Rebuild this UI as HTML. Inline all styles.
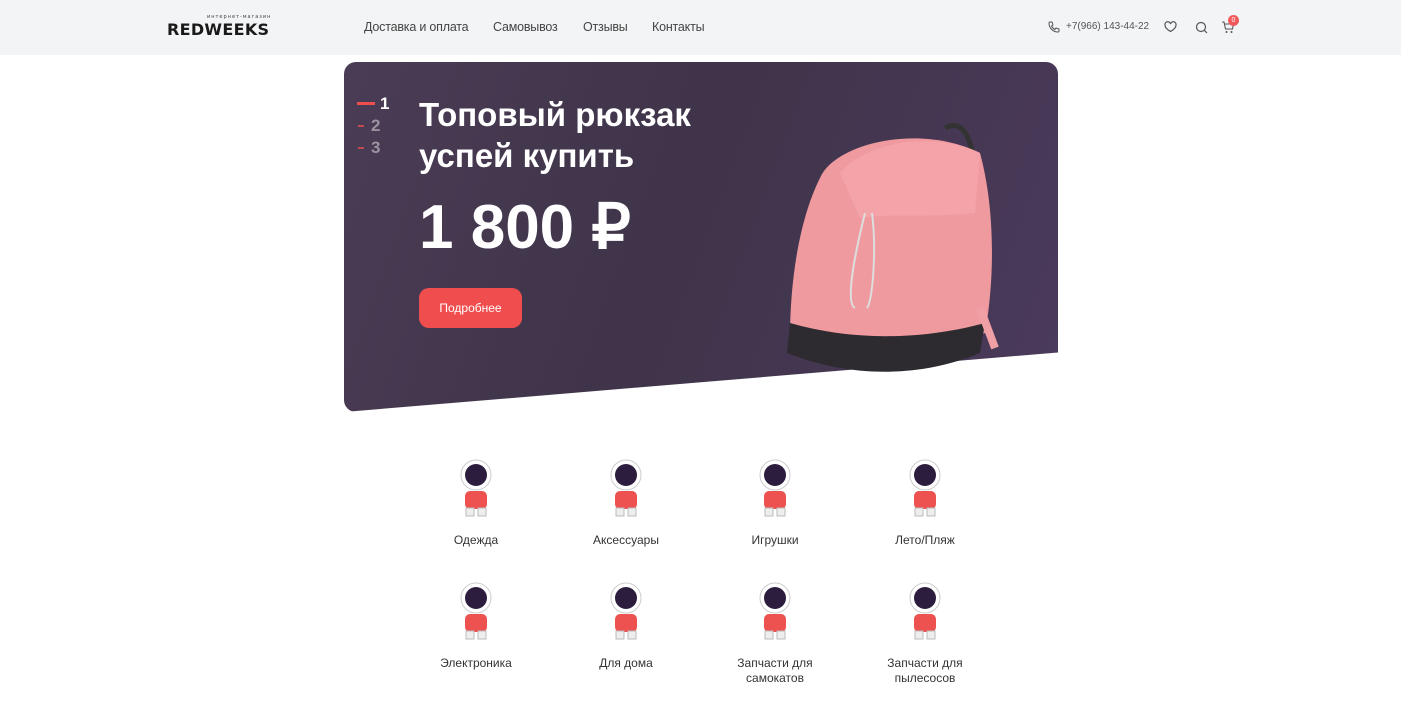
<!DOCTYPE html>
<html><head><meta charset="utf-8"><style>
*{margin:0;padding:0;box-sizing:border-box}
body{width:1401px;height:725px;background:#fff;font-family:"Liberation Sans",sans-serif;position:relative;overflow:hidden}
.hdr{position:absolute;left:0;top:0;width:1401px;height:55px;background:#f3f4f6}
.logo{position:absolute;left:167px;top:20px;font-weight:bold;font-size:16px;letter-spacing:0.3px;color:#1a1a1a;font-family:"DejaVu Sans",sans-serif;white-space:nowrap}
.logo small{position:absolute;left:40px;top:-6px;font-size:5px;letter-spacing:1px;color:#444;font-weight:normal;white-space:nowrap}
.nav{position:absolute;top:20px;font-size:12.5px;letter-spacing:-0.2px;color:#444;white-space:nowrap}
.ph{position:absolute;left:1066px;top:21px;font-size:10px;color:#555;white-space:nowrap}
.banner{position:absolute;left:344px;top:62px;width:714px;height:350px;border-radius:12px;background:linear-gradient(110deg,#4a3c55 0%,#3f3449 45%,#4b3a5c 100%);clip-path:polygon(0 0,100% 0,100% 83%,0 100%)}
.t{position:absolute;color:#fff;font-weight:bold;white-space:nowrap}
.btn{position:absolute;left:419px;top:288px;width:103px;height:40px;border-radius:10px;background:#f04e4e;color:#fff;font-size:12px;text-align:center;line-height:40px}
.cat{position:absolute;width:140px;text-align:center;font-size:12px;color:#333;line-height:15px}
.ic{position:absolute}
</style></head><body>
<div class="hdr"></div>
<div class="logo"><small>интернет-магазин</small>REDWEEKS</div>
<div class="nav" style="left:364px">Доставка и оплата</div>
<div class="nav" style="left:493px">Самовывоз</div>
<div class="nav" style="left:583px">Отзывы</div>
<div class="nav" style="left:652px">Контакты</div>
<svg class="ic" style="left:1048px;top:21px" width="12" height="12" viewBox="0 0 12 12"><path d="M2 1l2 0 1 3-1.5 1a7 7 0 003.5 3.5L8 7l3 1v2a1 1 0 01-1 1C5 11 1 7 1 2a1 1 0 011-1z" fill="none" stroke="#555" stroke-width="1"/></svg>
<div class="ph">+7(966) 143-44-22</div>
<svg class="ic" style="left:1164px;top:21px" width="13" height="12" viewBox="0 0 13 12"><path d="M6.5 10.5C2 8 1 6 1 4a2.6 2.6 0 015.5-1 2.6 2.6 0 015.5 1c0 2-1 4-5.5 6.5z" fill="none" stroke="#555" stroke-width="1.2"/></svg>
<svg class="ic" style="left:1195px;top:21px" width="13" height="13" viewBox="0 0 13 13"><circle cx="6" cy="6" r="4.5" fill="none" stroke="#555" stroke-width="1.2"/><path d="M9.3 9.3L12 12" stroke="#555" stroke-width="1.2"/></svg>
<svg class="ic" style="left:1221px;top:21px" width="14" height="13" viewBox="0 0 14 13"><path d="M1 1h2l1.5 7h7l1-5H4" fill="none" stroke="#555" stroke-width="1.1"/><circle cx="5.5" cy="11" r="1" fill="#555"/><circle cx="10.5" cy="11" r="1" fill="#555"/></svg>
<div style="position:absolute;left:1228px;top:15px;width:11px;height:11px;border-radius:50%;background:#f05a5a;color:#fff;font-size:7px;text-align:center;line-height:11px">0</div>

<div class="banner"></div>
<div style="position:absolute;left:357px;top:102px;width:18px;height:3px;background:#f04e4e"></div>
<div class="t" style="left:380px;top:94px;font-size:17px">1</div>
<div style="position:absolute;left:358px;top:125px;width:6px;height:2px;background:#c04a50"></div>
<div class="t" style="left:371px;top:116px;font-size:17px;color:#9a93a0">2</div>
<div style="position:absolute;left:358px;top:147px;width:6px;height:2px;background:#c04a50"></div>
<div class="t" style="left:371px;top:138px;font-size:17px;color:#9a93a0">3</div>
<div class="t" style="left:419px;top:94px;font-size:33px;line-height:41px">Топовый рюкзак<br>успей купить</div>
<div class="t" style="left:419px;top:190px;font-size:62px">1 800 ₽</div>
<div class="btn">Подробнее</div>
<svg class="ic" style="left:780px;top:118px" width="230" height="262" viewBox="0 0 230 262">
<path d="M165 10c15-8 25 5 28 30" fill="none" stroke="#333" stroke-width="5"/>
<path d="M40 60C55 25 140 5 200 35 215 90 215 160 205 215 150 235 80 240 10 220 10 160 20 100 40 60z" fill="#ef9a9e"/>
<path d="M10 205C80 225 150 220 205 205l-5 30c-60 25-130 25-193 0z" fill="#2e2b30"/>
<path d="M60 55C90 20 160 15 200 35l-5 60C150 100 110 95 80 100z" fill="#f4a3a8"/>
<path d="M200 190l15 40" stroke="#f0a0a5" stroke-width="8"/>
<path d="M85 95c-10 40-20 90-10 95M92 95c5 40 0 90-5 95" stroke="#ddd" stroke-width="2" fill="none"/>
</svg>

<svg width="0" height="0"><defs>
<g id="a"><circle cx="0" cy="-12" r="15" fill="#fff" stroke="#ccc"/><circle cx="0" cy="-12" r="11" fill="#2c1d3e"/><rect x="-11" y="4" width="22" height="18" rx="5" fill="#ee5250"/><rect x="-10" y="21" width="8" height="8" fill="#eee" stroke="#bbb"/><rect x="2" y="21" width="8" height="8" fill="#eee" stroke="#bbb"/></g>
</defs></svg>
<svg class="ic" style="left:0;top:0" width="1401" height="725">
<use href="#a" x="476" y="487"/><use href="#a" x="626" y="487"/><use href="#a" x="775" y="487"/><use href="#a" x="925" y="487"/>
<use href="#a" x="476" y="610"/><use href="#a" x="626" y="610"/><use href="#a" x="775" y="610"/><use href="#a" x="925" y="610"/>
</svg>
<div class="cat" style="left:406px;top:533px">Одежда</div>
<div class="cat" style="left:556px;top:533px">Аксессуары</div>
<div class="cat" style="left:705px;top:533px">Игрушки</div>
<div class="cat" style="left:855px;top:533px">Лето/Пляж</div>
<div class="cat" style="left:406px;top:656px">Электроника</div>
<div class="cat" style="left:556px;top:656px">Для дома</div>
<div class="cat" style="left:705px;top:656px">Запчасти для<br>самокатов</div>
<div class="cat" style="left:855px;top:656px">Запчасти для<br>пылесосов</div>
</body></html>
